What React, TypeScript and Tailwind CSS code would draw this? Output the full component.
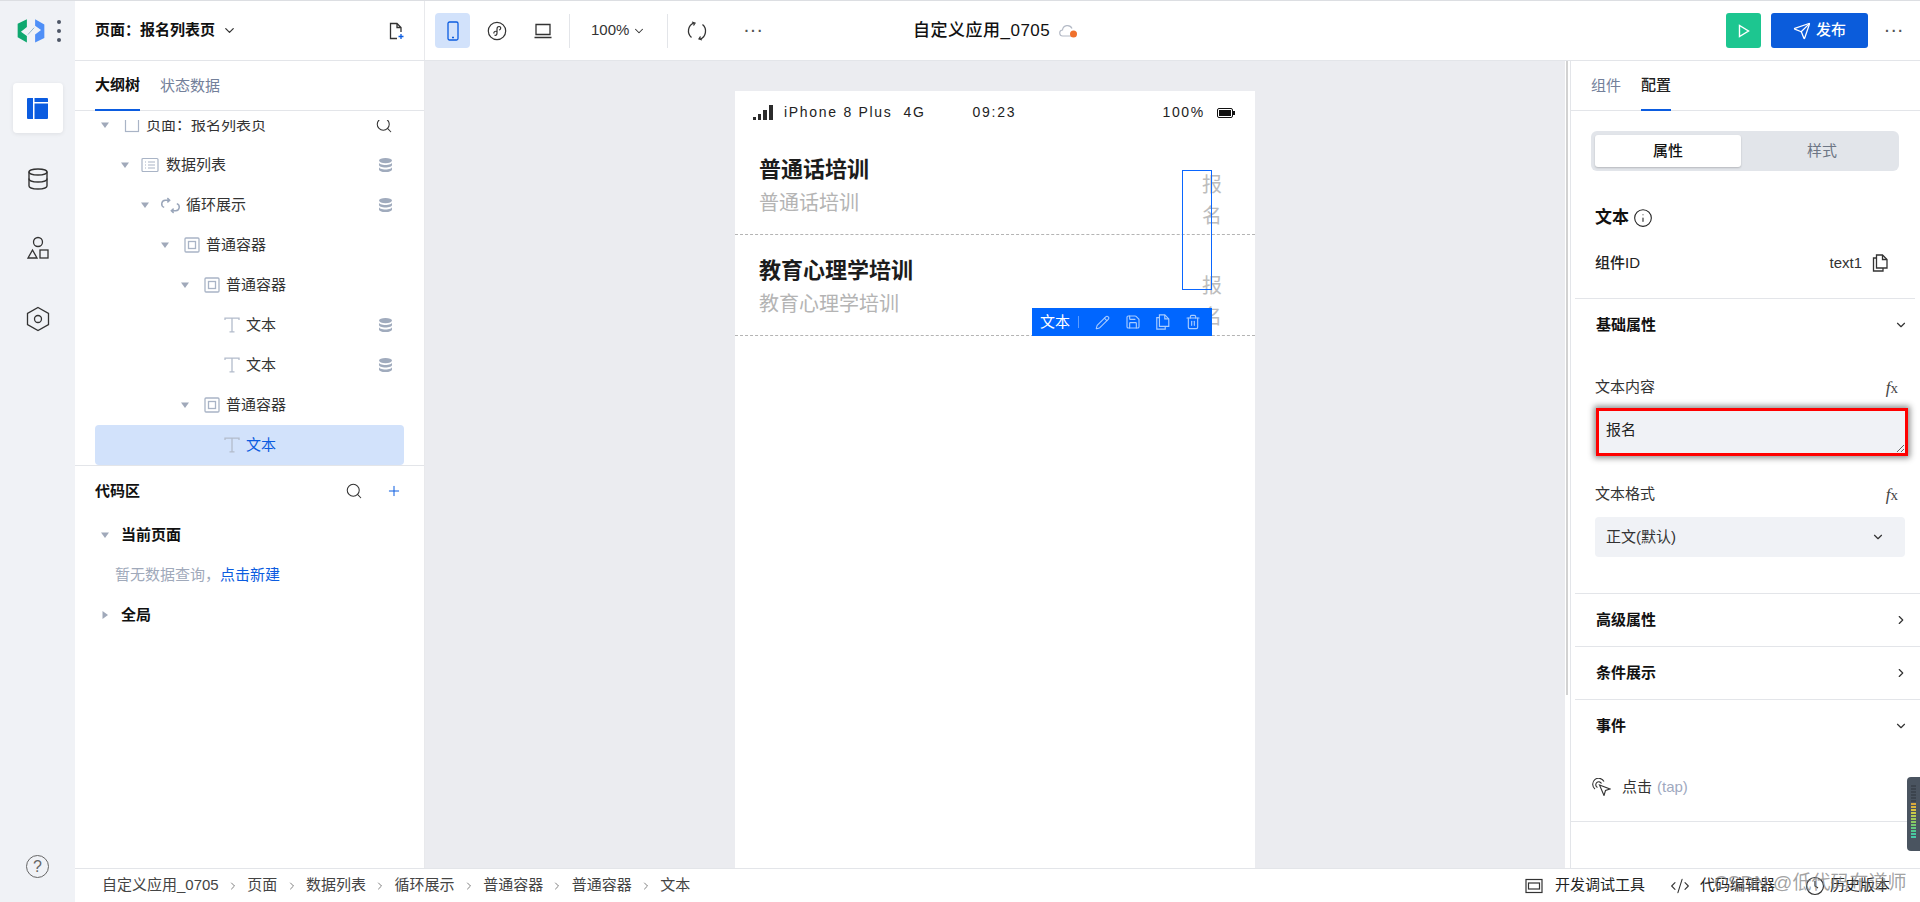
import React from 'react';
import { ChevronDown, ChevronRight, Database, Pencil, Plus, Save, Search, Send, Trash2, Info, CodeXml } from 'lucide-react';

interface TreeRow {
  depth: number;
  label: string;
  icon: 'page' | 'list' | 'loop' | 'box' | 'text';
  arrow?: boolean;
  data?: boolean;
  search?: boolean;
  active?: boolean;
}

const treeRows: TreeRow[] = [
  { depth: 0, label: '页面：报名列表页', icon: 'page', arrow: true, search: true },
  { depth: 1, label: '数据列表', icon: 'list', arrow: true, data: true },
  { depth: 2, label: '循环展示', icon: 'loop', arrow: true, data: true },
  { depth: 3, label: '普通容器', icon: 'box', arrow: true },
  { depth: 4, label: '普通容器', icon: 'box', arrow: true },
  { depth: 5, label: '文本', icon: 'text', data: true },
  { depth: 5, label: '文本', icon: 'text', data: true },
  { depth: 4, label: '普通容器', icon: 'box', arrow: true },
  { depth: 5, label: '文本', icon: 'text', active: true },
];

const crumbs = ['自定义应用_0705', '页面', '数据列表', '循环展示', '普通容器', '普通容器', '文本'];

const meterBars = ['#3c444e', '#3c444e', '#3c444e', '#3c444e', '#3c444e', '#3c444e', '#d8a83c', '#d8b43c', '#d8c040', '#c8c848', '#b4c850', '#a0c858', '#8cc860', '#78c870', '#64c880', '#50c890', '#48c8a0', '#48c8a8'];

const TreeIcon = ({ type }: { type: TreeRow['icon'] }) => {
  if (type === 'page') {
    return (
      <svg width="16" height="16" viewBox="0 0 16 16" fill="none" stroke="#a9b4c6" strokeWidth="1.2">
        <rect x="1.5" y="1.5" width="13" height="13" />
      </svg>
    );
  }
  if (type === 'list') {
    return (
      <svg width="18" height="16" viewBox="0 0 18 16" fill="none" stroke="#a9b4c6" strokeWidth="1.2" className="ml-[-3px]">
        <rect x="1" y="1.5" width="16" height="13" rx="1" />
        <path d="M4 5h1M7 5h7M4 8h1M7 8h7M4 11h1M7 11h7" />
      </svg>
    );
  }
  if (type === 'loop') {
    return (
      <svg width="21" height="17" viewBox="0 0 20 16" fill="none" stroke="#9aa6ba" strokeWidth="1.4" className="ml-[-3px] shrink-0">
        <path d="M9 3H5a3.5 3.5 0 0 0-1 6.8M7 1 9.2 3 7 5" />
        <path d="M11 13h4a3.5 3.5 0 0 0 1-6.8M13 15l-2.2-2L13 11" />
      </svg>
    );
  }
  if (type === 'box') {
    return (
      <svg width="16" height="16" viewBox="0 0 16 16" fill="none" stroke="#a9b4c6" strokeWidth="1.3">
        <rect x="1" y="1" width="14" height="14" rx="1" />
        <rect x="4.5" y="4.5" width="7" height="7" />
      </svg>
    );
  }
  return (
    <svg width="16" height="16" viewBox="0 0 16 16" fill="none" stroke="#b3bccb" strokeWidth="1.3">
      <path d="M1 3V1.2h14V3M8 1.2v13.6M5.5 14.8h5" />
    </svg>
  );
};

const Arrow = ({ right }: { right?: boolean }) => (
  <svg width="8" height="8" viewBox="0 0 8 8" fill="#a0a9ba">
    {right ? <path d="M1.5 0 7 4 1.5 8z" /> : <path d="M0 1.5h8L4 7z" />}
  </svg>
);

const DataStack = () => (
  <svg width="13" height="14" viewBox="0 0 13 14" fill="#a0abbd" className="mr-[12px] ml-auto">
    <ellipse cx="6.5" cy="2.6" rx="6.5" ry="2.6" />
    <path d="M0 4.6c0 1.400 2.900 2.500 6.500 2.500S13 6 13 4.600v2.400c0 1.400-2.900 2.500-6.500 2.500S0 8.400 0 7z" />
    <path d="M0 9c0 1.400 2.900 2.500 6.500 2.500S13 10.400 13 9v2.400C13 12.800 10.100 14 6.500 14S0 12.800 0 11.400z" />
  </svg>
);

const Fx = () => (
  <span className="font-['Liberation_Serif',serif] text-[17px] leading-none text-[#444] italic">
    f<span className="text-[15px] not-italic">x</span>
  </span>
);

const CopyFile = ({ className }: { className?: string }) => (
  <svg width="17" height="18" viewBox="0 0 17 18" fill="none" stroke="currentColor" strokeWidth="1.3" className={className}>
    <path d="M4.5 1h6l4.5 4.5V14H4.5z" />
    <path d="M10.5 1v4.5H15" />
    <path d="M4.5 4H1.5v13H11v-3" />
  </svg>
);

const Section = ({ title, open }: { title: string; open?: boolean }) => (
  <div className="flex h-[52px] items-center justify-between pr-[12px] pl-[25px]">
    <span className="pt-[1px] text-[15px] font-semibold text-[#111]">{title}</span>
    {open ? <ChevronDown size={14} strokeWidth={2} color="#333" /> : <ChevronRight size={14} strokeWidth={2} color="#333" />}
  </div>
);

const PhoneRow = ({ title }: { title: string }) => (
  <div className="flex h-[101px] justify-between border-b border-dashed border-[#b4b4b4] pr-[33px] pl-[24px]">
    <div className="pt-[21px]">
      <div className="h-[30px] text-[22px] leading-[30px] font-bold text-[#1c1c1c]">{title}</div>
      <div className="mt-[3px] h-[30px] text-[20px] leading-[30px] text-[#b4b4b4]">{title}</div>
    </div>
    <div className="mt-[36px] w-[20px] text-[20px] leading-[31px] text-[#bdbdbd]">报名</div>
  </div>
);

export default function App() {
  return (
    <div className="relative flex h-[902px] w-[1920px] overflow-hidden border-t border-[#dcdee2] bg-white font-['Liberation_Sans','Noto_Sans_CJK_SC',sans-serif] text-[15px] text-[#222]">
      {/* left rail */}
      <aside className="flex w-[75px] shrink-0 flex-col items-center bg-[#f0f2f6]">
        <div className="flex h-[59px] w-full items-center pl-[17px]">
          <svg width="28" height="24" viewBox="0 0 85 72">
            <path d="M30 0 2 14v41l28 16V51L12 38l18-14z" fill="#0fa86f" />
            <path d="M55 71l28-14V16L55 0v20l18 13-18 14z" fill="#4f8ff7" />
            <path d="M33 47 52 26" stroke="#8fb4c8" strokeWidth="3" />
          </svg>
          <div className="ml-[12px] flex flex-col gap-[5px]">
            <span className="h-[4px] w-[4px] rounded-full bg-[#4d5666]" />
            <span className="h-[4px] w-[4px] rounded-full bg-[#4d5666]" />
            <span className="h-[4px] w-[4px] rounded-full bg-[#4d5666]" />
          </div>
        </div>
        <div className="mt-[23px] flex h-[50px] w-[50px] items-center justify-center rounded-[4px] bg-white shadow-[0_1px_4px_rgba(0,0,0,0.08)]">
          <svg width="21" height="21" viewBox="0 0 21 21" fill="#0b5ce0">
            <path d="M1 0h5v21H1a1 1 0 0 1-1-1V1a1 1 0 0 1 1-1zM7.500 0H20a1 1 0 0 1 1 1v3H7.500zM7.500 5.500H21V20a1 1 0 0 1-1 1H7.500z" />
          </svg>
        </div>
        <div className="mt-[34px]">
          <Database size={24} strokeWidth={1.4} color="#333" />
        </div>
        <svg className="mt-[45px]" width="24" height="24" viewBox="0 0 24 24" fill="none" stroke="#333" strokeWidth="1.3">
          <circle cx="12" cy="6" r="4.500" />
          <path d="M6.500 14 11 22H2z" />
          <rect x="14" y="14" width="8" height="8" />
        </svg>
        <svg className="mt-[46px]" width="24" height="26" viewBox="0 0 24 26" fill="none" stroke="#333" strokeWidth="1.3">
          <path d="M12 1.500 22.500 7.500v11L12 24.500 1.500 18.500v-11z" />
          <circle cx="12" cy="13" r="3.500" />
        </svg>
        <div className="mt-auto mb-[24px] flex h-[23px] w-[23px] items-center justify-center rounded-full border border-[#666] text-[16px] leading-none text-[#666]">?</div>
      </aside>

      <div className="flex min-w-0 flex-1 flex-col">
        {/* top bar */}
        <header className="flex h-[60px] shrink-0 border-b border-[#e3e5e9]">
          <div className="flex w-[350px] items-center border-r border-[#e8e9ec] pr-[19px] pl-[20px]">
            <span className="font-semibold text-[#111]">页面：报名列表页</span>
            <ChevronDown size={15} strokeWidth={2} color="#333" className="ml-[7px]" />
            <svg className="ml-auto" width="16" height="18" viewBox="0 0 16 18" fill="none" stroke="#333" strokeWidth="1.3">
              <path d="M8 16.500H1.500v-15h6.500l4 4V10M8 1.500v4h4" />
              <path d="M12 12v5M9.500 14.500h5" stroke="#0b5ce0" />
            </svg>
          </div>
          <div className="relative flex flex-1 items-center pl-[10px]">
            <div className="flex h-[35px] w-[35px] items-center justify-center rounded-[4px] bg-[#d2e2fb]">
              <svg width="12" height="20" viewBox="0 0 12 20" fill="none" stroke="#0b5ce0" strokeWidth="1.3">
                <rect x="1" y="1" width="10" height="18" rx="1.500" />
                <path d="M5 16.500h2" />
              </svg>
            </div>
            <svg className="ml-[17px]" width="20" height="20" viewBox="0 0 20 20" fill="none" stroke="#333" strokeWidth="1.2">
              <circle cx="10" cy="10" r="8.700" />
              <path d="M7.500 14c1.500 1 2.500-.2 2.500-2V8c0-2 1.800-3 3-2.200s.8 3-1 3.200" />
              <path d="M10 10.500c-2-.8-3.500.5-3 2" />
            </svg>
            <svg className="ml-[27px]" width="18" height="16" viewBox="0 0 18 16" fill="none" stroke="#333" strokeWidth="1.3">
              <path d="M2 11.500V1.500h14v10H2zM0.500 14.500h17" />
            </svg>
            <span className="ml-[17px] h-[34px] w-px bg-[#e3e5e9]" />
            <span className="ml-[21px] text-[15px] text-[#333]">100%</span>
            <ChevronDown size={14} strokeWidth={1.8} color="#333" className="ml-[3px]" />
            <span className="ml-[21px] h-[34px] w-px bg-[#e3e5e9]" />
            <svg className="ml-[19px]" width="20" height="20" viewBox="0 0 20 20" fill="none" stroke="#333" strokeWidth="1.3">
              <path d="M7 1.800A8.700 8.700 0 0 0 4.500 16.500M13 18.200A8.700 8.700 0 0 0 15.500 3.500" />
              <path d="M5 1 8 2 6.500 4.500M15 19l-3-1 1.500-2.500" />
            </svg>
            <span className="ml-[37px] text-[14px] leading-none font-bold tracking-[2px] text-[#555]">···</span>
            <div className="absolute left-[488px] flex items-center">
              <span className="text-[17px] font-medium tracking-[0.5px] text-[#111]">自定义应用_0705</span>
              <svg className="ml-[9px]" width="19" height="16" viewBox="0 0 19 16" fill="none">
                <path d="M12 13H4a3 3 0 0 1-.5-6A5 5 0 0 1 13 5.500" stroke="#b4bac6" strokeWidth="1.2" />
                <circle cx="14.500" cy="11" r="3.500" fill="#f0702c" />
              </svg>
            </div>
            <div className="ml-auto flex items-center pr-[15px]">
              <div className="flex h-[35px] w-[35px] items-center justify-center rounded-[3px] bg-[#1dc690]">
                <svg width="12" height="14" viewBox="0 0 12 14" fill="none" stroke="#fff" strokeWidth="1.4">
                  <path d="M1.500 1.500v11l9-5.500z" />
                </svg>
              </div>
              <div className="ml-[10px] flex h-[35px] w-[97px] items-center justify-center gap-[5px] rounded-[3px] bg-[#0b5cdb] font-medium text-white">
                <Send size={18} strokeWidth={1.7} />
                发布
              </div>
              <span className="ml-[17px] text-[14px] leading-none font-bold tracking-[2px] text-[#555]">···</span>
            </div>
          </div>
        </header>

        <div className="flex min-h-0 flex-1">
          {/* outline panel */}
          <section className="flex w-[350px] shrink-0 flex-col border-r border-[#e8e9ec]">
            <div className="flex h-[50px] shrink-0 gap-[20px] border-b border-[#e3e5e9] pl-[20px]">
              <div className="flex h-[50px] items-center border-b-2 border-[#0b5ce0] font-semibold text-[#111]">大纲树</div>
              <div className="flex h-[50px] items-center text-[#73809a]">状态数据</div>
            </div>
            <div className="mt-[9px] h-[345px] shrink-0 overflow-hidden">
              <div className="mt-[-15px]">
                {treeRows.map((row, i) => (
                  <div key={i} className={row.active ? 'mx-[20px] flex h-[40px] items-center rounded-[4px] bg-[#d2e2fb]' : 'mx-[20px] flex h-[40px] items-center'}>
                    <div className="flex items-center" style={{ paddingLeft: 6 + row.depth * 20 }}>
                      <div className="flex w-[8px] justify-center">{row.arrow && <Arrow />}</div>
                      <div className="ml-[13px] flex w-[19px] justify-center">
                        <TreeIcon type={row.icon} />
                      </div>
                      <span className={row.active ? 'ml-[5px] text-[#0b5ce0]' : 'ml-[5px] text-[#333]'}>{row.label}</span>
                    </div>
                    {row.data && <DataStack />}
                    {row.search && <Search size={18} strokeWidth={1.4} color="#333" className="mr-[11px] ml-auto" />}
                  </div>
                ))}
              </div>
            </div>
            <div className="flex-1 border-t border-[#e3e5e9]">
              <div className="mt-[10px] flex h-[30px] items-center pr-[22px] pl-[20px]">
                <span className="font-semibold text-[#111]">代码区</span>
                <Search size={18} strokeWidth={1.4} color="#333" className="ml-auto" />
                <Plus size={16} strokeWidth={1.5} color="#0b5ce0" className="ml-[23px]" />
              </div>
              <div className="mt-[14px] flex h-[30px] items-center pl-[26px]">
                <Arrow />
                <span className="ml-[12px] font-semibold text-[#111]">当前页面</span>
              </div>
              <div className="mt-[10px] flex h-[30px] items-center pl-[40px] text-[#a0a9ba]">
                暂无数据查询，<span className="text-[#0b5ce0]">点击新建</span>
              </div>
              <div className="mt-[10px] flex h-[30px] items-center pl-[26px]">
                <Arrow right />
                <span className="ml-[12px] font-semibold text-[#111]">全局</span>
              </div>
            </div>
          </section>

          {/* canvas */}
          <main className="min-w-0 flex-1 overflow-hidden bg-[#ebecf0] pt-[30px]">
            <div className="relative mx-auto h-full w-[520px] bg-white">
              <div className="flex h-[43px] items-center pr-[20px] pl-[18px] text-[14px] tracking-[1.7px] text-[#222]">
                <svg width="20" height="15" viewBox="0 0 20 15" fill="#2b2b2b">
                  <path d="M0 12h3v3H0zM5 9h3v6H5zM10 5h4v10h-4zM16 0h4v15h-4z" />
                </svg>
                <span className="ml-[11px]">iPhone 8 Plus</span>
                <span className="ml-[11px]">4G</span>
                <span className="ml-[47px]">09:23</span>
                <span className="ml-auto">100%</span>
                <svg className="ml-[12px]" width="18" height="10" viewBox="0 0 18 10">
                  <rect x="0.500" y="0.500" width="15" height="9" rx="1.500" fill="none" stroke="#111" />
                  <rect x="2" y="2" width="12" height="6" fill="#111" />
                  <rect x="16" y="3" width="2" height="4" fill="#111" />
                </svg>
              </div>
              <PhoneRow title="普通话培训" />
              <PhoneRow title="教育心理学培训" />

              <div className="absolute top-[79px] left-[447px] h-[120px] w-[30px] border border-[#0a66ff]" />
              <div className="absolute top-[217px] left-[297px] flex h-[28px] w-[180px] items-center bg-[#0066ff] pl-[8px] text-white">
                <span>文本</span>
                <span className="ml-[8px] h-[12px] w-px bg-[#5c9dff]" />
                <Pencil size={15} strokeWidth={1.7} color="#a8ccff" className="ml-[16px]" />
                <Save size={16} strokeWidth={1.7} color="#a8ccff" className="ml-[15px]" />
                <CopyFile className="ml-[14px] h-[16px] w-[16px] text-[#a8ccff]" />
                <Trash2 size={16} strokeWidth={1.7} color="#a8ccff" className="ml-[14px]" />
              </div>
            </div>
          </main>

          <div className="w-[5px] shrink-0 bg-white pl-px">
            <div className="h-[634px] w-[2px] bg-[#d2d2d2]" />
          </div>

          {/* props panel */}
          <section className="w-[350px] shrink-0 border-l border-[#e3e5e9]">
            <div className="flex h-[50px] gap-[20px] border-b border-[#e3e5e9] pl-[20px]">
              <div className="flex h-[50px] items-center text-[#73809a]">组件</div>
              <div className="flex h-[50px] items-center border-b-2 border-[#0b5ce0] font-medium text-[#222]">配置</div>
            </div>
            <div className="mx-[20px] mt-[20px] flex h-[40px] w-[308px] rounded-[6px] bg-[#e2e5ea] p-[4px]">
              <div className="flex w-[146px] items-center justify-center rounded-[3px] bg-white font-medium text-[#111] shadow-[0_1px_2px_rgba(0,0,0,0.2)]">属性</div>
              <div className="flex flex-1 items-center justify-center pl-[8px] text-[#6d7685]">样式</div>
            </div>
            <div className="mt-[34px] flex h-[26px] items-center pl-[24px]">
              <span className="text-[17px] font-bold text-[#111]">文本</span>
              <Info size={20} strokeWidth={1.3} color="#222" className="ml-[4px]" />
            </div>
            <div className="mt-[19px] flex h-[26px] items-center pr-[31px] pl-[24px]">
              <span className="font-medium text-[#222]">组件ID</span>
              <span className="ml-auto text-[#333]">text1</span>
              <CopyFile className="ml-[10px] text-[#333]" />
            </div>
            <div className="mt-[22px] mr-[5px] ml-[4px] h-px bg-[#e3e5e9]" />

            <Section title="基础属性" open />
            <div className="mt-[24px] flex h-[24px] items-center justify-between pr-[22px] pl-[24px] text-[#333]">
              文本内容
              <Fx />
            </div>
            <div className="mt-[9px] ml-[25px] flex">
              <textarea
                readOnly
                defaultValue="报名"
                className="h-[48px] w-[312px] border-[3px] border-[#f00] bg-[#f0f2f6] px-[7px] py-[8px] text-[15px] leading-[22px] text-[#222] shadow-[0_0_6px_2px_rgba(0,0,0,0.45)] outline-none"
              />
            </div>
            <div className="mt-[26px] flex h-[24px] items-center justify-between pr-[22px] pl-[24px] text-[#333]">
              文本格式
              <Fx />
            </div>
            <div className="mt-[11px] ml-[24px] flex h-[40px] w-[310px] items-center justify-between rounded-[4px] bg-[#f0f2f6] pr-[20px] pl-[11px] text-[#333]">
              正文(默认)
              <ChevronDown size={14} strokeWidth={2} color="#333" />
            </div>
            <div className="mt-[36px] ml-[4px] h-px bg-[#e3e5e9]" />

            <Section title="高级属性" />
            <div className="ml-[4px] h-px bg-[#e3e5e9]" />
            <Section title="条件展示" />
            <div className="ml-[4px] h-px bg-[#e3e5e9]" />
            <div className="h-[50px]">
              <Section title="事件" open />
            </div>
            <div className="mt-[25px] flex h-[24px] items-center pl-[21px]">
              <svg width="19" height="18" viewBox="0 0 19 18" fill="none" stroke="#333" strokeWidth="1.1">
                <path d="M3 11A6 6 0 1 1 12 3.500M5.500 9.500A3 3 0 1 1 9.500 5.500" />
                <path d="M7.500 7 18 11l-4.500 1.500L12 17.500z" />
              </svg>
              <span className="ml-[11px] text-[#333]">点击</span>
              <span className="ml-[5px] text-[#a0a9c0]">(tap)</span>
            </div>
            <div className="mt-[22px] h-px bg-[#e3e5e9]" />
          </section>
        </div>

        {/* status bar */}
        <footer className="flex h-[34px] shrink-0 items-center border-t border-[#e3e5e9] pr-[30px] pl-[25px] text-[#444]">
          {crumbs.map((crumb, i) => (
            <React.Fragment key={i}>
              {i > 0 && <ChevronRight size={12} strokeWidth={1.5} color="#555" className="mx-[6.3px]" />}
              <span className="mx-[2px]">{crumb}</span>
            </React.Fragment>
          ))}
          <div className="ml-auto flex items-center text-[#222]">
            <svg width="18" height="16" viewBox="0 0 18 16" fill="none" stroke="#333" strokeWidth="1.2">
              <rect x="1" y="1.500" width="16" height="13" />
              <rect x="3.500" y="5" width="11" height="6" />
            </svg>
            <span className="ml-[12px]">开发调试工具</span>
            <CodeXml size={20} strokeWidth={1.3} color="#333" className="ml-[25px]" />
            <span className="ml-[10px]">代码编辑器</span>
            <svg className="ml-[30px]" width="20" height="20" viewBox="0 0 20 20" fill="none" stroke="#333" strokeWidth="1.2">
              <circle cx="10" cy="10" r="8.500" />
              <path d="M10 5v5l3 2" />
            </svg>
            <span className="ml-[5px]">历史版本</span>
          </div>
        </footer>
      </div>

      {/* floating meter, right edge */}
      <div className="absolute top-[776px] right-0 flex h-[74px] w-[13px] flex-col items-center gap-[1px] rounded-l-[4px] bg-[#4a5460] pt-[8px]">
        {meterBars.map((color, i) => (
          <span key={i} className="h-[2px] w-[5px]" style={{ backgroundColor: color }} />
        ))}
      </div>

      {/* watermark */}
      <div className="pointer-events-none absolute top-[868px] left-[1714px] text-[19px] leading-[28px] whitespace-nowrap text-[#7a7a7a]/70">
        CSDN @低代码布道师
      </div>
    </div>
  );
}
